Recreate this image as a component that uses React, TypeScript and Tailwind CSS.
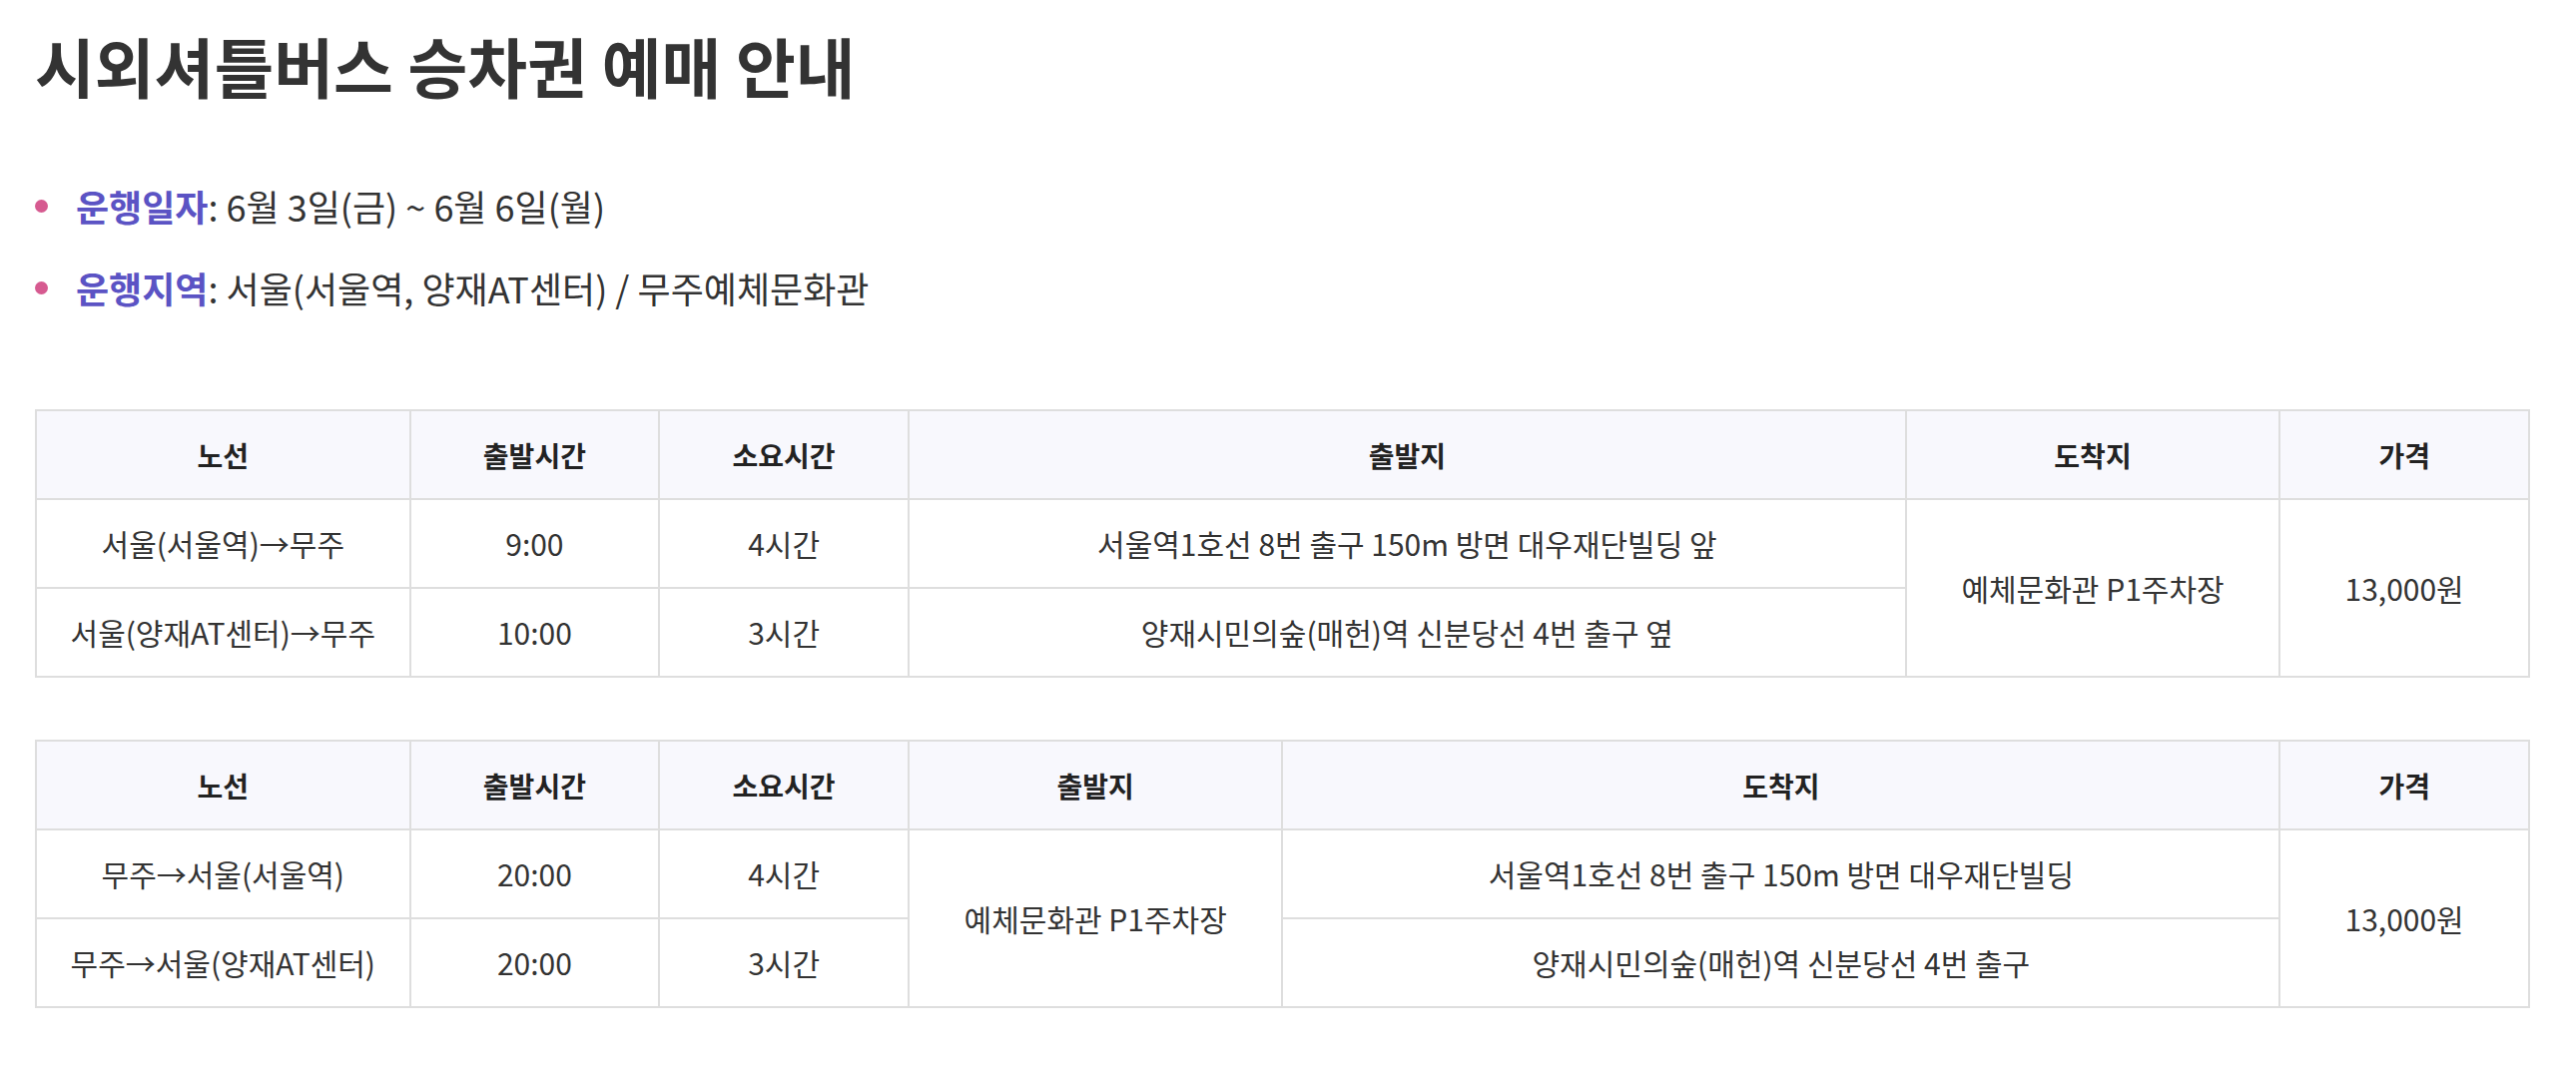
import React from "react";

type Row = { route: string; time: string; dur: string; from?: string; to?: string };

const FONT = { fontFamily: '"Noto Sans CJK KR", "Noto Sans", sans-serif' };

const cell = "border-2 border-[#dedede] text-center align-middle px-3 text-[30px]";
const head = "border-2 border-[#dedede] text-center align-middle px-3 bg-[#f8f8fd] font-bold text-[28px] text-[#222]";

function Bullet({ label, children }: { label: string; children: React.ReactNode }) {
  return (
    <li className="flex items-center h-[82px]">
      <span className="w-[13px] h-[13px] rounded-full bg-[#d65a90] mr-[28px] shrink-0" />
      <span className="text-[36px] text-[#333]">
        <b className="text-[#5b53c4] font-bold">{label}</b>: {children}
      </span>
    </li>
  );
}

export default function App() {
  const going: Row[] = [
    { route: "서울(서울역)→무주", time: "9:00", dur: "4시간", from: "서울역1호선 8번 출구 150m 방면 대우재단빌딩 앞" },
    { route: "서울(양재AT센터)→무주", time: "10:00", dur: "3시간", from: "양재시민의숲(매헌)역 신분당선 4번 출구 옆" },
  ];
  const back: Row[] = [
    { route: "무주→서울(서울역)", time: "20:00", dur: "4시간", to: "서울역1호선 8번 출구 150m 방면 대우재단빌딩" },
    { route: "무주→서울(양재AT센터)", time: "20:00", dur: "3시간", to: "양재시민의숲(매헌)역 신분당선 4번 출구" },
  ];

  return (
    <div className="min-h-screen bg-white pl-[35px] pr-[46px] pt-[29px]" style={FONT}>
      <h1 className="text-[65px] font-bold text-[#333] leading-[72px]">시외셔틀버스 승차권 예매 안내</h1>

      {/* 운행 정보 */}
      <ul className="mt-[64px]">
        <Bullet label="운행일자">6월 3일(금) ~ 6월 6일(월)</Bullet>
        <Bullet label="운행지역">서울(서울역, 양재AT센터) / 무주예체문화관</Bullet>
      </ul>

      {/* 서울 → 무주 */}
      <table className="w-full table-fixed border-collapse mt-[81px] text-[#333]">
        <colgroup>
          <col className="w-[15%]" /><col className="w-[10%]" /><col className="w-[10%]" />
          <col className="w-[40%]" /><col className="w-[15%]" /><col className="w-[10%]" />
        </colgroup>
        <thead>
          <tr className="h-[89px]">
            <th className={head}>노선</th>
            <th className={head}>출발시간</th>
            <th className={head}>소요시간</th>
            <th className={head}>출발지</th>
            <th className={head}>도착지</th>
            <th className={head}>가격</th>
          </tr>
        </thead>
        <tbody>
          {going.map((r, i) => (
            <tr key={r.route} className="h-[89px]">
              <td className={cell}>{r.route}</td>
              <td className={cell}>{r.time}</td>
              <td className={cell}>{r.dur}</td>
              <td className={cell}>{r.from}</td>
              {i === 0 && (
                <>
                  <td rowSpan={2} className={cell}>예체문화관 P1주차장</td>
                  <td rowSpan={2} className={cell}>13,000원</td>
                </>
              )}
            </tr>
          ))}
        </tbody>
      </table>

      {/* 무주 → 서울 */}
      <table className="w-full table-fixed border-collapse mt-[62px] text-[#333]">
        <colgroup>
          <col className="w-[15%]" /><col className="w-[10%]" /><col className="w-[10%]" />
          <col className="w-[15%]" /><col className="w-[40%]" /><col className="w-[10%]" />
        </colgroup>
        <thead>
          <tr className="h-[89px]">
            <th className={head}>노선</th>
            <th className={head}>출발시간</th>
            <th className={head}>소요시간</th>
            <th className={head}>출발지</th>
            <th className={head}>도착지</th>
            <th className={head}>가격</th>
          </tr>
        </thead>
        <tbody>
          {back.map((r, i) => (
            <tr key={r.route} className="h-[89px]">
              <td className={cell}>{r.route}</td>
              <td className={cell}>{r.time}</td>
              <td className={cell}>{r.dur}</td>
              {i === 0 && <td rowSpan={2} className={cell}>예체문화관 P1주차장</td>}
              <td className={cell}>{r.to}</td>
              {i === 0 && <td rowSpan={2} className={cell}>13,000원</td>}
            </tr>
          ))}
        </tbody>
      </table>
    </div>
  );
}
